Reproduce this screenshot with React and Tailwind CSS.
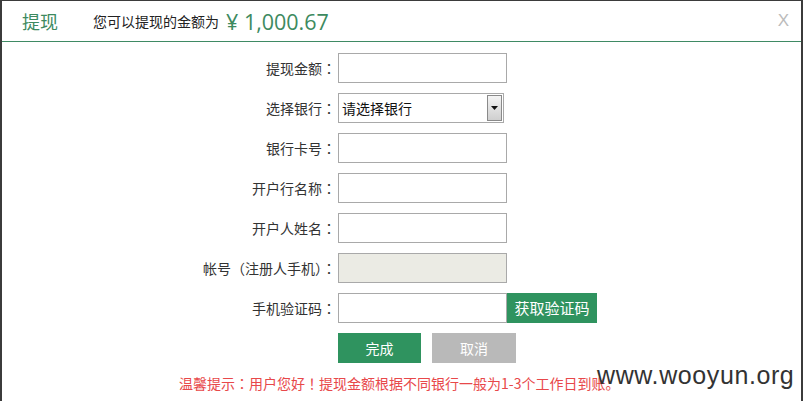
const FONT = "font-['Microsoft_YaHei','Noto_Sans_CJK_SC',sans-serif]"

function Colon({ ch = '：' }) {
  return <span className="font-['Noto_Sans_CJK_TC',sans-serif]">{ch}</span>
}

function Row({ label, children }) {
  return (
    <div className="flex items-center h-[30px]">
      <div className="w-[336px] shrink-0 text-right pr-[2px] text-[14px] text-[#333]">
        {label}
        <Colon />
      </div>
      {children}
    </div>
  )
}

function Input({ disabled }) {
  return (
    <div
      className={`w-[169px] shrink-0 h-[30px] border border-[#a9a9a9] ${disabled ? 'bg-[#ebebe4]' : 'bg-white'}`}
    />
  )
}

export default function App() {
  return (
    <div className={`relative w-[803px] h-[401px] bg-white border-t border-l-2 border-r-2 border-[#3b3b3b] overflow-hidden ${FONT}`}>
      <div className="h-[41px] flex items-center border-b border-[#3f8a64] pl-[20px] pr-[12px]">
        <span className="text-[18px] text-[#3d8a60]">提现</span>
        <span className="ml-[35px] text-[14px] text-[#222]">您可以提现的金额为</span>
        <span className="ml-[7px] text-[21.5px] text-[#3d8a60] font-['Segoe_UI','Open_Sans',sans-serif] leading-none pt-[1px]">¥ 1,000.67</span>
        <span className="ml-auto text-[17px] text-[#bbb] font-['Liberation_Sans',sans-serif]">X</span>
      </div>

      <div className="flex flex-col gap-[10px] pt-[11px]">
        <Row label="提现金额" >
          <Input />
        </Row>
        <Row label="选择银行">
          <div className="w-[166px] h-[30px] border border-[#a9a9a9] flex items-center bg-white">
            <span className="pl-[3px] text-[14px] text-[#111] flex-1">请选择银行</span>
            <div className="w-[15px] h-[26px] mr-[1px] border border-[#8a8a8a] bg-gradient-to-b from-[#f4f4f4] to-[#cfcfcf] flex items-center justify-center">
              <svg width="7" height="4" viewBox="0 0 7 4"><path d="M0 0h7L3.5 4z" fill="#111" /></svg>
            </div>
          </div>
        </Row>
        <Row label="银行卡号">
          <Input />
        </Row>
        <Row label="开户行名称">
          <Input />
        </Row>
        <Row label="开户人姓名">
          <Input />
        </Row>
        <Row label={<>帐号<Colon ch="（" />注册人手机<Colon ch="）" /></>}>
          <Input disabled />
        </Row>
        <Row label="手机验证码">
          <Input />
          <div className="w-[90px] max-w-[90px] overflow-hidden shrink-0 h-[30px] bg-[#2f935f] text-white text-[15px] flex items-center justify-center">获取验证码</div>
        </Row>
        <div className="flex pl-[336px] gap-[11px]">
          <div className="w-[83px] h-[30px] bg-[#2f935f] text-white text-[14px] flex items-center justify-center">完成</div>
          <div className="w-[84px] h-[30px] bg-[#b9b9b9] text-white text-[14px] flex items-center justify-center">取消</div>
        </div>
      </div>

      <div className="pl-[177px] mt-[10px] text-[14px] text-[#e8484a]">
        温馨提示<Colon />用户您好<Colon ch="！" />提现金额根据不同银行一般为1-3个工作日到账。
      </div>

      <div className="absolute left-[595px] top-[356px] text-[25px] text-[#333] font-['Liberation_Sans',sans-serif] tracking-[0.6px]">
        www.wooyun.org
      </div>
    </div>
  )
}
